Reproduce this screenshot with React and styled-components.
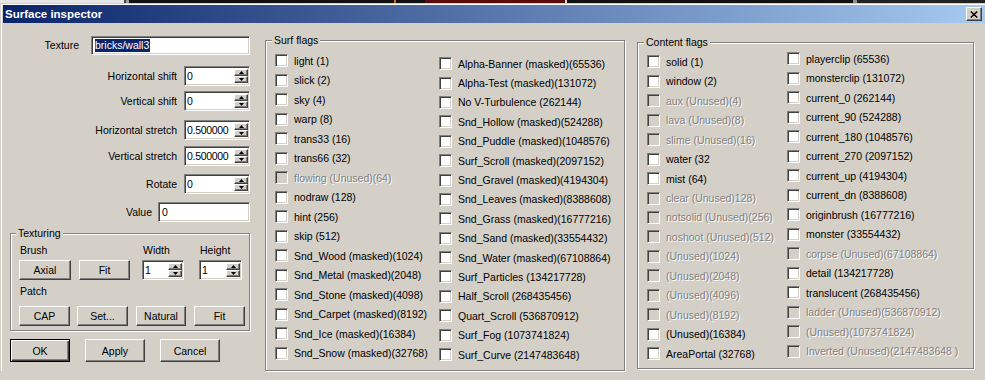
import React from 'react';
import styled, { createGlobalStyle } from 'styled-components';

const Global = createGlobalStyle`
  html, body {
    margin: 0;
    padding: 0;
    background: #d4d0c8;
  }
  body {
    font-family: 'Liberation Sans', Arial, sans-serif;
    font-size: 10.5px;
    color: #000;
  }
`;

const Root = styled.div`
  width: 985px;
  height: 380px;
  overflow: hidden;
  background: #d4d0c8;
`;

const Backdrop = styled.div`
  height: 3px;
  background: linear-gradient(
    to right,
    #e6e6e6 0 124px,
    #404040 124px 126px,
    #a0a0a0 126px 129px,
    #111 129px 394px,
    #c07020 394px 396px,
    #111 396px 425px,
    #5a0c0c 425px 565px,
    #ddd 565px 567px,
    #111 567px 853px,
    #909090 853px 857px,
    #222 857px
  );
`;

const Window = styled.div`
  padding: 2px 0 0 3px;
  box-shadow: inset 1px 1px 0 #d4d0c8, inset 2px 2px 0 #fff;
`;

const TitleBar = styled.div`
  height: 18px;
  display: flex;
  align-items: center;
  justify-content: space-between;
  padding: 0 3px 0 2px;
  background: linear-gradient(to right, #0a246a, #a6caf0);
`;

const TitleText = styled.span`
  color: #fff;
  font-weight: bold;
  font-size: 11.5px;
`;

const raised = `
  border: 1px solid;
  border-color: #fff #404040 #404040 #fff;
  box-shadow: inset -1px -1px 0 #808080;
  background: #d4d0c8;
  box-sizing: border-box;
`;

const sunken = `
  border: 1px solid;
  border-color: #808080 #fff #fff #808080;
  box-shadow: inset 1px 1px 0 #404040, inset -1px -1px 0 #d4d0c8;
  box-sizing: border-box;
`;

const CloseButton = styled.div`
  ${raised}
  width: 16px;
  height: 14px;
  display: flex;
  align-items: center;
  justify-content: center;
`;

const Body = styled.div`
  display: flex;
  align-items: flex-start;
`;

const LeftPanel = styled.div`
  width: 262px;
  flex: none;
  padding: 12px 15px 0 0;
  box-sizing: border-box;
`;

const FormRow = styled.div`
  display: flex;
  justify-content: flex-end;
  align-items: center;
  height: 20px;
  gap: ${p => p.$gap || 7}px;
  margin-top: ${p => p.$top || 0}px;
`;

const Label = styled.span`
  line-height: 13px;
  white-space: nowrap;
`;

const TextField = styled.div`
  ${sunken}
  width: ${p => p.$w}px;
  height: ${p => p.$h || 20}px;
  background: #fff;
  display: flex;
  align-items: center;
  padding-left: 3px;
  white-space: nowrap;
`;

const Selected = styled.span`
  background: #0a246a;
  color: #fff;
  line-height: 13px;
  padding-right: 1px;
`;

const SpinBox = styled.div`
  ${sunken}
  width: ${p => p.$w}px;
  height: ${p => p.$h || 20}px;
  background: #fff;
  display: flex;
  align-items: stretch;
  padding: 2px 1px 2px 2px;
`;

const SpinValue = styled.span`
  flex: 1;
  display: flex;
  align-items: center;
  overflow: hidden;
  white-space: nowrap;
  letter-spacing: -0.3px;
`;

const SpinButtons = styled.div`
  width: 14px;
  flex: none;
  display: flex;
  flex-direction: column;
`;

const SpinHalf = styled.div`
  ${raised}
  flex: 1;
  display: flex;
  align-items: center;
  justify-content: center;
`;

const GroupBox = styled.div`
  position: relative;
  box-sizing: border-box;
  border: 1px solid #808080;
  box-shadow: inset 1px 1px 0 #fff, 1px 1px 0 #fff;
  width: ${p => p.$w}px;
  height: ${p => p.$h}px;
  margin: ${p => p.$margin};
  padding: ${p => p.$pad};
  flex: none;
`;

const Caption = styled.span`
  position: absolute;
  top: -7px;
  left: ${p => p.$left || 6}px;
  padding: 0 2px;
  line-height: 13px;
  background: #d4d0c8;
  white-space: nowrap;
`;

const TexGrid = styled.div`
  display: grid;
  grid-template-columns: ${p => p.$cols};
  align-items: center;
  margin-top: ${p => p.$top || 0}px;
  height: ${p => p.$h}px;
`;

const SubLabel = styled.span`
  line-height: 13px;
  padding-left: 1px;
`;

const Button = styled.div`
  ${raised}
  width: ${p => p.$w}px;
  height: ${p => p.$h || 20}px;
  display: flex;
  align-items: center;
  justify-content: center;
  white-space: nowrap;
  ${p => p.$default && `
    border-color: #000;
    box-shadow: inset 1px 1px 0 #fff, inset -1px -1px 0 #404040, inset -2px -2px 0 #808080;
  `}
`;

const DialogButtons = styled.div`
  display: flex;
  gap: 15px;
  margin: 8px 0 0 7px;
`;

const Columns = styled.div`
  display: flex;
`;

const FlagColumn = styled.div`
  width: ${p => p.$w ? `${p.$w}px` : 'auto'};
  padding-top: ${p => p.$offset || 0}px;
  flex: none;
`;

const Flag = styled.div`
  display: flex;
  align-items: center;
  gap: 6px;
  height: ${p => p.$row}px;
  white-space: nowrap;
  color: ${p => (p.$off ? '#808080' : '#000')};
  text-shadow: ${p => (p.$off ? '1px 1px 0 #fff' : 'none')};
`;

const Check = styled.span`
  ${sunken}
  width: 13px;
  height: 13px;
  flex: none;
  background: ${p => (p.$off ? '#d4d0c8' : '#fff')};
`;

const surfLeft = [
  'light (1)', 'slick (2)', 'sky (4)', 'warp (8)', 'trans33 (16)', 'trans66 (32)',
  '~flowing (Unused)(64)', 'nodraw (128)', 'hint (256)', 'skip (512)',
  'Snd_Wood (masked)(1024)', 'Snd_Metal (masked)(2048)', 'Snd_Stone (masked)(4098)',
  'Snd_Carpet (masked)(8192)', 'Snd_Ice (masked)(16384)', 'Snd_Snow (masked)(32768)',
];

const surfRight = [
  'Alpha-Banner (masked)(65536)', 'Alpha-Test (masked)(131072)', 'No V-Turbulence (262144)',
  'Snd_Hollow (masked)(524288)', 'Snd_Puddle (masked)(1048576)', 'Surf_Scroll (masked)(2097152)',
  'Snd_Gravel (masked)(4194304)', 'Snd_Leaves (masked)(8388608)', 'Snd_Grass (masked)(16777216)',
  'Snd_Sand (masked)(33554432)', 'Snd_Water (masked)(67108864)', 'Surf_Particles (134217728)',
  'Half_Scroll (268435456)', 'Quart_Scroll (536870912)', 'Surf_Fog (1073741824)',
  'Surf_Curve (2147483648)',
];

const contentLeft = [
  'solid (1)', 'window (2)', '~aux (Unused)(4)', '~lava (Unused)(8)', '~slime (Unused)(16)',
  'water (32', 'mist (64)', '~clear (Unused)128)', '~notsolid (Unused)(256)',
  '~noshoot (Unused)(512)', '~(Unused)(1024)', '~(Unused)(2048)', '~(Unused)(4096)',
  '~(Unused)(8192)', '(Unused)(16384)', 'AreaPortal (32768)',
];

const contentRight = [
  'playerclip (65536)', 'monsterclip (131072)', 'current_0 (262144)', 'current_90 (524288)',
  'current_180 (1048576)', 'current_270 (2097152)', 'current_up (4194304)',
  'current_dn (8388608)', 'originbrush (16777216)', 'monster (33554432)',
  '~corpse (Unused)(67108864)', 'detail (134217728)', 'translucent (268435456)',
  '~ladder (Unused)(536870912)', '~(Unused)(1073741824)', '~Inverted (Unused)(2147483648 )',
];

const Arrow = ({ up }) => (
  <svg width="5" height="3" viewBox="0 0 5 3">
    <polygon points={up ? '2.5,0 5,3 0,3' : '0,0 5,0 2.5,3'} fill="#000" />
  </svg>
);

const Spinner = ({ value, w }) => (
  <SpinBox $w={w}>
    <SpinValue>{value}</SpinValue>
    <SpinButtons>
      <SpinHalf><Arrow up /></SpinHalf>
      <SpinHalf><Arrow /></SpinHalf>
    </SpinButtons>
  </SpinBox>
);

const FlagList = ({ items, w, offset, row }) => (
  <FlagColumn $w={w} $offset={offset}>
    {items.map(item => {
      const off = item.startsWith('~');
      return (
        <Flag key={item} $off={off} $row={row}>
          <Check $off={off} />
          <span>{off ? item.slice(1) : item}</span>
        </Flag>
      );
    })}
  </FlagColumn>
);

const App = () => (
  <Root>
    <Global />
    <Backdrop />
    <Window>
      <TitleBar>
        <TitleText>Surface inspector</TitleText>
        <CloseButton>
          <svg width="8" height="7" viewBox="0 0 8 7">
            <path d="M0.8 0.5L7.2 6.5M7.2 0.5L0.8 6.5" stroke="#000" strokeWidth="1.5" />
          </svg>
        </CloseButton>
      </TitleBar>
      <Body>
        <LeftPanel>
          <FormRow $gap={12}>
            <Label>Texture</Label>
            <TextField $w={159} $h={19}><Selected>bricks/wall3</Selected></TextField>
          </FormRow>
          <FormRow $top={11}>
            <Label>Horizontal shift</Label>
            <Spinner value="0" w={66} />
          </FormRow>
          <FormRow $top={5}>
            <Label>Vertical shift</Label>
            <Spinner value="0" w={66} />
          </FormRow>
          <FormRow $top={9}>
            <Label>Horizontal stretch</Label>
            <Spinner value="0.500000" w={66} />
          </FormRow>
          <FormRow $top={6}>
            <Label>Vertical stretch</Label>
            <Spinner value="0.500000" w={66} />
          </FormRow>
          <FormRow $top={8}>
            <Label>Rotate</Label>
            <Spinner value="0" w={66} />
          </FormRow>
          <FormRow $top={8} $gap={6}>
            <Label>Value</Label>
            <TextField $w={92}>0</TextField>
          </FormRow>

          <GroupBox $w={240} $h={98} $margin="11px 0 0 7px" $pad="9px 0 0 8px">
            <Caption $left={5}>Texturing</Caption>
            <TexGrid $cols="60px 63px 57px 43px" $h={14}>
              <SubLabel>Brush</SubLabel>
              <span />
              <SubLabel>Width</SubLabel>
              <SubLabel>Height</SubLabel>
            </TexGrid>
            <TexGrid $cols="60px 63px 57px 43px" $h={21} $top={2}>
              <Button $w={52}>Axial</Button>
              <Button $w={51}>Fit</Button>
              <Spinner value="1" w={42} />
              <Spinner value="1" w={43} />
            </TexGrid>
            <TexGrid $cols="60px" $h={13} $top={5}>
              <SubLabel>Patch</SubLabel>
            </TexGrid>
            <TexGrid $cols="58px 59px 58px 51px" $h={20} $top={8}>
              <Button $w={51}>CAP</Button>
              <Button $w={51}>Set...</Button>
              <Button $w={50}>Natural</Button>
              <Button $w={51}>Fit</Button>
            </TexGrid>
          </GroupBox>

          <DialogButtons>
            <Button $w={60} $h={23} $default>OK</Button>
            <Button $w={60} $h={23}>Apply</Button>
            <Button $w={60} $h={23}>Cancel</Button>
          </DialogButtons>
        </LeftPanel>

        <GroupBox $w={360} $h={331} $margin="17px 0 0 0" $pad="10px 0 0 9px">
          <Caption>Surf flags</Caption>
          <Columns>
            <FlagList items={surfLeft} w={164} offset={0} row={19.5} />
            <FlagList items={surfRight} offset={3} row={19.4} />
          </Columns>
        </GroupBox>

        <GroupBox $w={337} $h={327} $margin="19px 0 0 12px" $pad="6px 0 0 9px">
          <Caption>Content flags</Caption>
          <Columns>
            <FlagList items={contentLeft} w={140} offset={3} row={19.47} />
            <FlagList items={contentRight} offset={0} row={19.53} />
          </Columns>
        </GroupBox>
      </Body>
    </Window>
  </Root>
);

export default App;
